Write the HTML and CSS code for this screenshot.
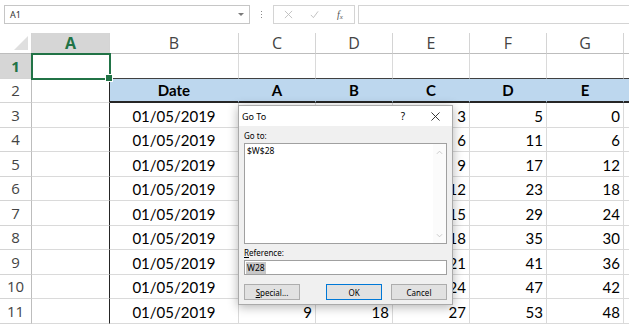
FILE: index.html
```html
<!DOCTYPE html>
<html lang="en">
<head>
    <meta charset="UTF-8">
    <title>Go To</title>
    <link rel="stylesheet" href="styles.css">
</head>
<body>
    <div class="formula-bar">
        <div class="name-box"><span>A1</span><span class="caret"></span></div>
        <div class="grip"><i></i><i></i><i></i></div>
        <div class="fx-buttons">
            <svg class="fx-icon" viewBox="0 0 10 10"><path d="M1 1L9 9M9 1L1 9"/></svg>
            <svg class="fx-icon" viewBox="0 0 10 10"><path d="M1 5.5L3.8 8.5L9 1.5"/></svg>
            <span class="fx">f<sub>x</sub></span>
        </div>
        <div class="formula-input"></div>
    </div>

    <div class="sheet">
        <div class="corner"><span class="corner-tri"></span></div>
        <div class="col-head active">A</div>
        <div class="col-head">B</div>
        <div class="col-head">C</div>
        <div class="col-head">D</div>
        <div class="col-head">E</div>
        <div class="col-head">F</div>
        <div class="col-head">G</div>
        <div class="col-head"></div>

        <div class="row-head active">1</div>
        <div class="cell selected"></div>
        <div class="cell above-table"></div>
        <div class="cell above-table"></div>
        <div class="cell above-table"></div>
        <div class="cell above-table"></div>
        <div class="cell above-table"></div>
        <div class="cell above-table"></div>
        <div class="cell above-table"></div>

        <div class="row-head">2</div>
        <div class="cell edge"></div>
        <div class="cell th">Date</div>
        <div class="cell th">A</div>
        <div class="cell th">B</div>
        <div class="cell th">C</div>
        <div class="cell th">D</div>
        <div class="cell th">E</div>
        <div class="cell th"></div>

        <div class="row-head">3</div>
        <div class="cell edge"></div>
        <div class="cell date">01/05/2019</div>
        <div class="cell num">1</div>
        <div class="cell num">2</div>
        <div class="cell num">3</div>
        <div class="cell num">5</div>
        <div class="cell num">0</div>
        <div class="cell"></div>

        <div class="row-head">4</div>
        <div class="cell edge"></div>
        <div class="cell date">01/05/2019</div>
        <div class="cell num">2</div>
        <div class="cell num">4</div>
        <div class="cell num">6</div>
        <div class="cell num">11</div>
        <div class="cell num">6</div>
        <div class="cell"></div>

        <div class="row-head">5</div>
        <div class="cell edge"></div>
        <div class="cell date">01/05/2019</div>
        <div class="cell num">3</div>
        <div class="cell num">6</div>
        <div class="cell num">9</div>
        <div class="cell num">17</div>
        <div class="cell num">12</div>
        <div class="cell"></div>

        <div class="row-head">6</div>
        <div class="cell edge"></div>
        <div class="cell date">01/05/2019</div>
        <div class="cell num">4</div>
        <div class="cell num">8</div>
        <div class="cell num">12</div>
        <div class="cell num">23</div>
        <div class="cell num">18</div>
        <div class="cell"></div>

        <div class="row-head">7</div>
        <div class="cell edge"></div>
        <div class="cell date">01/05/2019</div>
        <div class="cell num">5</div>
        <div class="cell num">10</div>
        <div class="cell num">15</div>
        <div class="cell num">29</div>
        <div class="cell num">24</div>
        <div class="cell"></div>

        <div class="row-head">8</div>
        <div class="cell edge"></div>
        <div class="cell date">01/05/2019</div>
        <div class="cell num">6</div>
        <div class="cell num">12</div>
        <div class="cell num">18</div>
        <div class="cell num">35</div>
        <div class="cell num">30</div>
        <div class="cell"></div>

        <div class="row-head">9</div>
        <div class="cell edge"></div>
        <div class="cell date">01/05/2019</div>
        <div class="cell num">7</div>
        <div class="cell num">14</div>
        <div class="cell num">21</div>
        <div class="cell num">41</div>
        <div class="cell num">36</div>
        <div class="cell"></div>

        <div class="row-head">10</div>
        <div class="cell edge"></div>
        <div class="cell date">01/05/2019</div>
        <div class="cell num">8</div>
        <div class="cell num">16</div>
        <div class="cell num">24</div>
        <div class="cell num">47</div>
        <div class="cell num">42</div>
        <div class="cell"></div>

        <div class="row-head">11</div>
        <div class="cell edge"></div>
        <div class="cell date">01/05/2019</div>
        <div class="cell num">9</div>
        <div class="cell num">18</div>
        <div class="cell num">27</div>
        <div class="cell num">53</div>
        <div class="cell num">48</div>
        <div class="cell"></div>
    </div>

    <div class="dialog">
        <div class="dialog-title">
            <span>Go To</span>
            <div class="title-buttons">
                <span class="help">?</span>
                <svg class="close" viewBox="0 0 10 10"><path d="M0.5 0.5L9.5 9.5M9.5 0.5L0.5 9.5"/></svg>
            </div>
        </div>
        <div class="dialog-body">
            <div class="label">Go to:</div>
            <div class="listbox">
                <div class="list-items">
                    <div>$W$28</div>
                </div>
                <div class="scrollbar">
                    <svg viewBox="0 0 8 5"><path d="M1 4L4 1L7 4"/></svg>
                    <svg viewBox="0 0 8 5"><path d="M1 1L4 4L7 1"/></svg>
                </div>
            </div>
            <div class="label ref-label"><u>R</u>eference:</div>
            <div class="ref-input"><span class="selection">W28</span></div>
            <div class="dialog-buttons">
                <button class="btn"><u>S</u>pecial...</button>
                <div class="btn-group">
                    <button class="btn default">OK</button>
                    <button class="btn">Cancel</button>
                </div>
            </div>
        </div>
    </div>
</body>
</html>
```

FILE: styles.css
```css
* {
    margin: 0;
    padding: 0;
    box-sizing: border-box;
}

body {
    width: 629px;
    height: 328px;
    overflow: hidden;
    background: #fff;
    font-family: Lato, "Open Sans", sans-serif;
    color: #000;
    position: relative;
}

/* formula bar */
.formula-bar {
    display: flex;
    height: 33px;
    padding: 5px 0 0 4px;
}

.name-box {
    width: 246px;
    height: 19px;
    border: 1px solid #c6c6c6;
    display: flex;
    align-items: center;
    justify-content: space-between;
    padding: 0 5px 0 5px;
    font: 9px "Noto Sans", sans-serif;
    color: #333;
}

.caret {
    width: 0;
    height: 0;
    border-left: 3px solid transparent;
    border-right: 3px solid transparent;
    border-top: 3px solid #7a7a7a;
}

.grip {
    width: 23px;
    height: 19px;
    display: flex;
    flex-direction: column;
    align-items: center;
    justify-content: center;
    gap: 2px;
}

.grip i {
    width: 1px;
    height: 1px;
    background: #8a8a8a;
}

.fx-buttons {
    width: 82px;
    height: 19px;
    border: 1px solid #d4d4d4;
    display: flex;
    align-items: center;
    padding-left: 10px;
    gap: 17px;
}

.fx-icon {
    width: 9px;
    height: 9px;
    fill: none;
    stroke: #bdbdbd;
    stroke-width: 1;
}

.fx {
    font: italic 10px "Liberation Serif", serif;
    color: #555;
    margin-left: 1px;
}

.fx sub {
    font-size: 7px;
    vertical-align: -1px;
}

.formula-input {
    flex: 1;
    height: 19px;
    margin-left: 3px;
    border: 1px solid #d4d4d4;
    border-right: none;
}

/* sheet grid */
.sheet {
    display: grid;
    grid-template-columns: 32px 78px 129px repeat(6, 77px);
    grid-template-rows: 21px repeat(11, 24.5px);
}

.corner {
    border-right: 1px solid #d4d4d4;
    border-bottom: 1px solid #bdbdbd;
    position: relative;
}

.corner-tri {
    position: absolute;
    right: 3px;
    bottom: 3px;
    width: 0;
    height: 0;
    border-left: 14px solid transparent;
    border-bottom: 14px solid #dfdfdf;
}

.col-head {
    display: flex;
    align-items: center;
    justify-content: center;
    font: 16px "Open Sans", sans-serif;
    color: #444;
    border-right: 1px solid #d4d4d4;
    border-bottom: 1px solid #bdbdbd;
}

.row-head {
    display: flex;
    align-items: center;
    justify-content: center;
    font: 15px "Open Sans", sans-serif;
    color: #444;
    border-right: 1px solid #bdbdbd;
    border-bottom: 1px solid #d4d4d4;
}

.col-head.active,
.row-head.active {
    background: #d6d6d6;
    color: #217346;
    font-weight: 700;
}

.cell {
    display: flex;
    align-items: flex-end;
    padding: 0 3px 2px;
    font-size: 15px;
    border-right: 1px solid #dadada;
    border-bottom: 1px solid #dadada;
    white-space: nowrap;
}

.cell.selected {
    position: relative;
    outline: 2px solid #217346;
    outline-offset: -1px;
    z-index: 1;
}

.cell.selected::after {
    content: "";
    position: absolute;
    right: -4px;
    bottom: -4px;
    width: 6px;
    height: 6px;
    background: #217346;
    border: 1px solid #fff;
}

.cell.above-table {
    border-bottom-color: #404040;
}

.cell.edge {
    border-right-color: #262626;
}

.cell.th {
    background: #bdd7ee;
    border-right-color: #bdd7ee;
    border-bottom: 2px solid #262626;
    justify-content: center;
    font-weight: 700;
}

.cell.date {
    justify-content: center;
}

.cell.num {
    justify-content: flex-end;
}

/* Go To dialog */
.dialog {
    position: absolute;
    left: 238px;
    top: 105px;
    width: 215px;
    height: 200px;
    background: #f0f0f0;
    border: 1px solid #aaa;
    box-shadow: 0 2px 10px rgba(0, 0, 0, 0.3);
    font: 8px "Noto Sans", sans-serif;
    color: #000;
    z-index: 5;
}

.dialog-title {
    height: 20px;
    background: #fff;
    display: flex;
    align-items: center;
    justify-content: space-between;
    padding: 0 12px 0 3px;
    font-size: 9px;
}

.title-buttons {
    display: flex;
    align-items: center;
    gap: 26px;
}

.help {
    font-size: 10px;
}

.close {
    width: 9px;
    height: 9px;
    fill: none;
    stroke: #222;
    stroke-width: 1;
}

.dialog-body {
    padding: 3px 5px 0 5px;
}

.label {
    height: 14px;
    line-height: 14px;
}

.listbox {
    height: 101px;
    background: #fff;
    border: 1px solid #a0a0a0;
    display: flex;
    justify-content: space-between;
}

.list-items {
    padding: 1px 2px;
    font-size: 8.5px;
}

.scrollbar {
    width: 13px;
    display: flex;
    flex-direction: column;
    justify-content: space-between;
    align-items: center;
    padding: 6px 0 5px;
    background: #fbfbfb;
}

.scrollbar svg {
    width: 7px;
    height: 5px;
    fill: none;
    stroke: #c4c4c4;
    stroke-width: 1;
}

.ref-label {
    margin-top: 2px;
}

.ref-input {
    height: 15px;
    background: #fff;
    border: 1px solid #a0a0a0;
    display: flex;
    align-items: center;
    padding-left: 1px;
    font-size: 8.5px;
}

.selection {
    background: #c8c8c8;
    padding: 0 1px;
    line-height: 12px;
}

.dialog-buttons {
    display: flex;
    justify-content: space-between;
    margin-top: 9px;
}

.btn-group {
    display: flex;
    gap: 9px;
}

.btn {
    width: 56px;
    height: 16px;
    background: #e1e1e1;
    border: 1px solid #adadad;
    font: 8px "Noto Sans", sans-serif;
    color: #000;
}

.btn.default {
    border-color: #0078d7;
}
```
